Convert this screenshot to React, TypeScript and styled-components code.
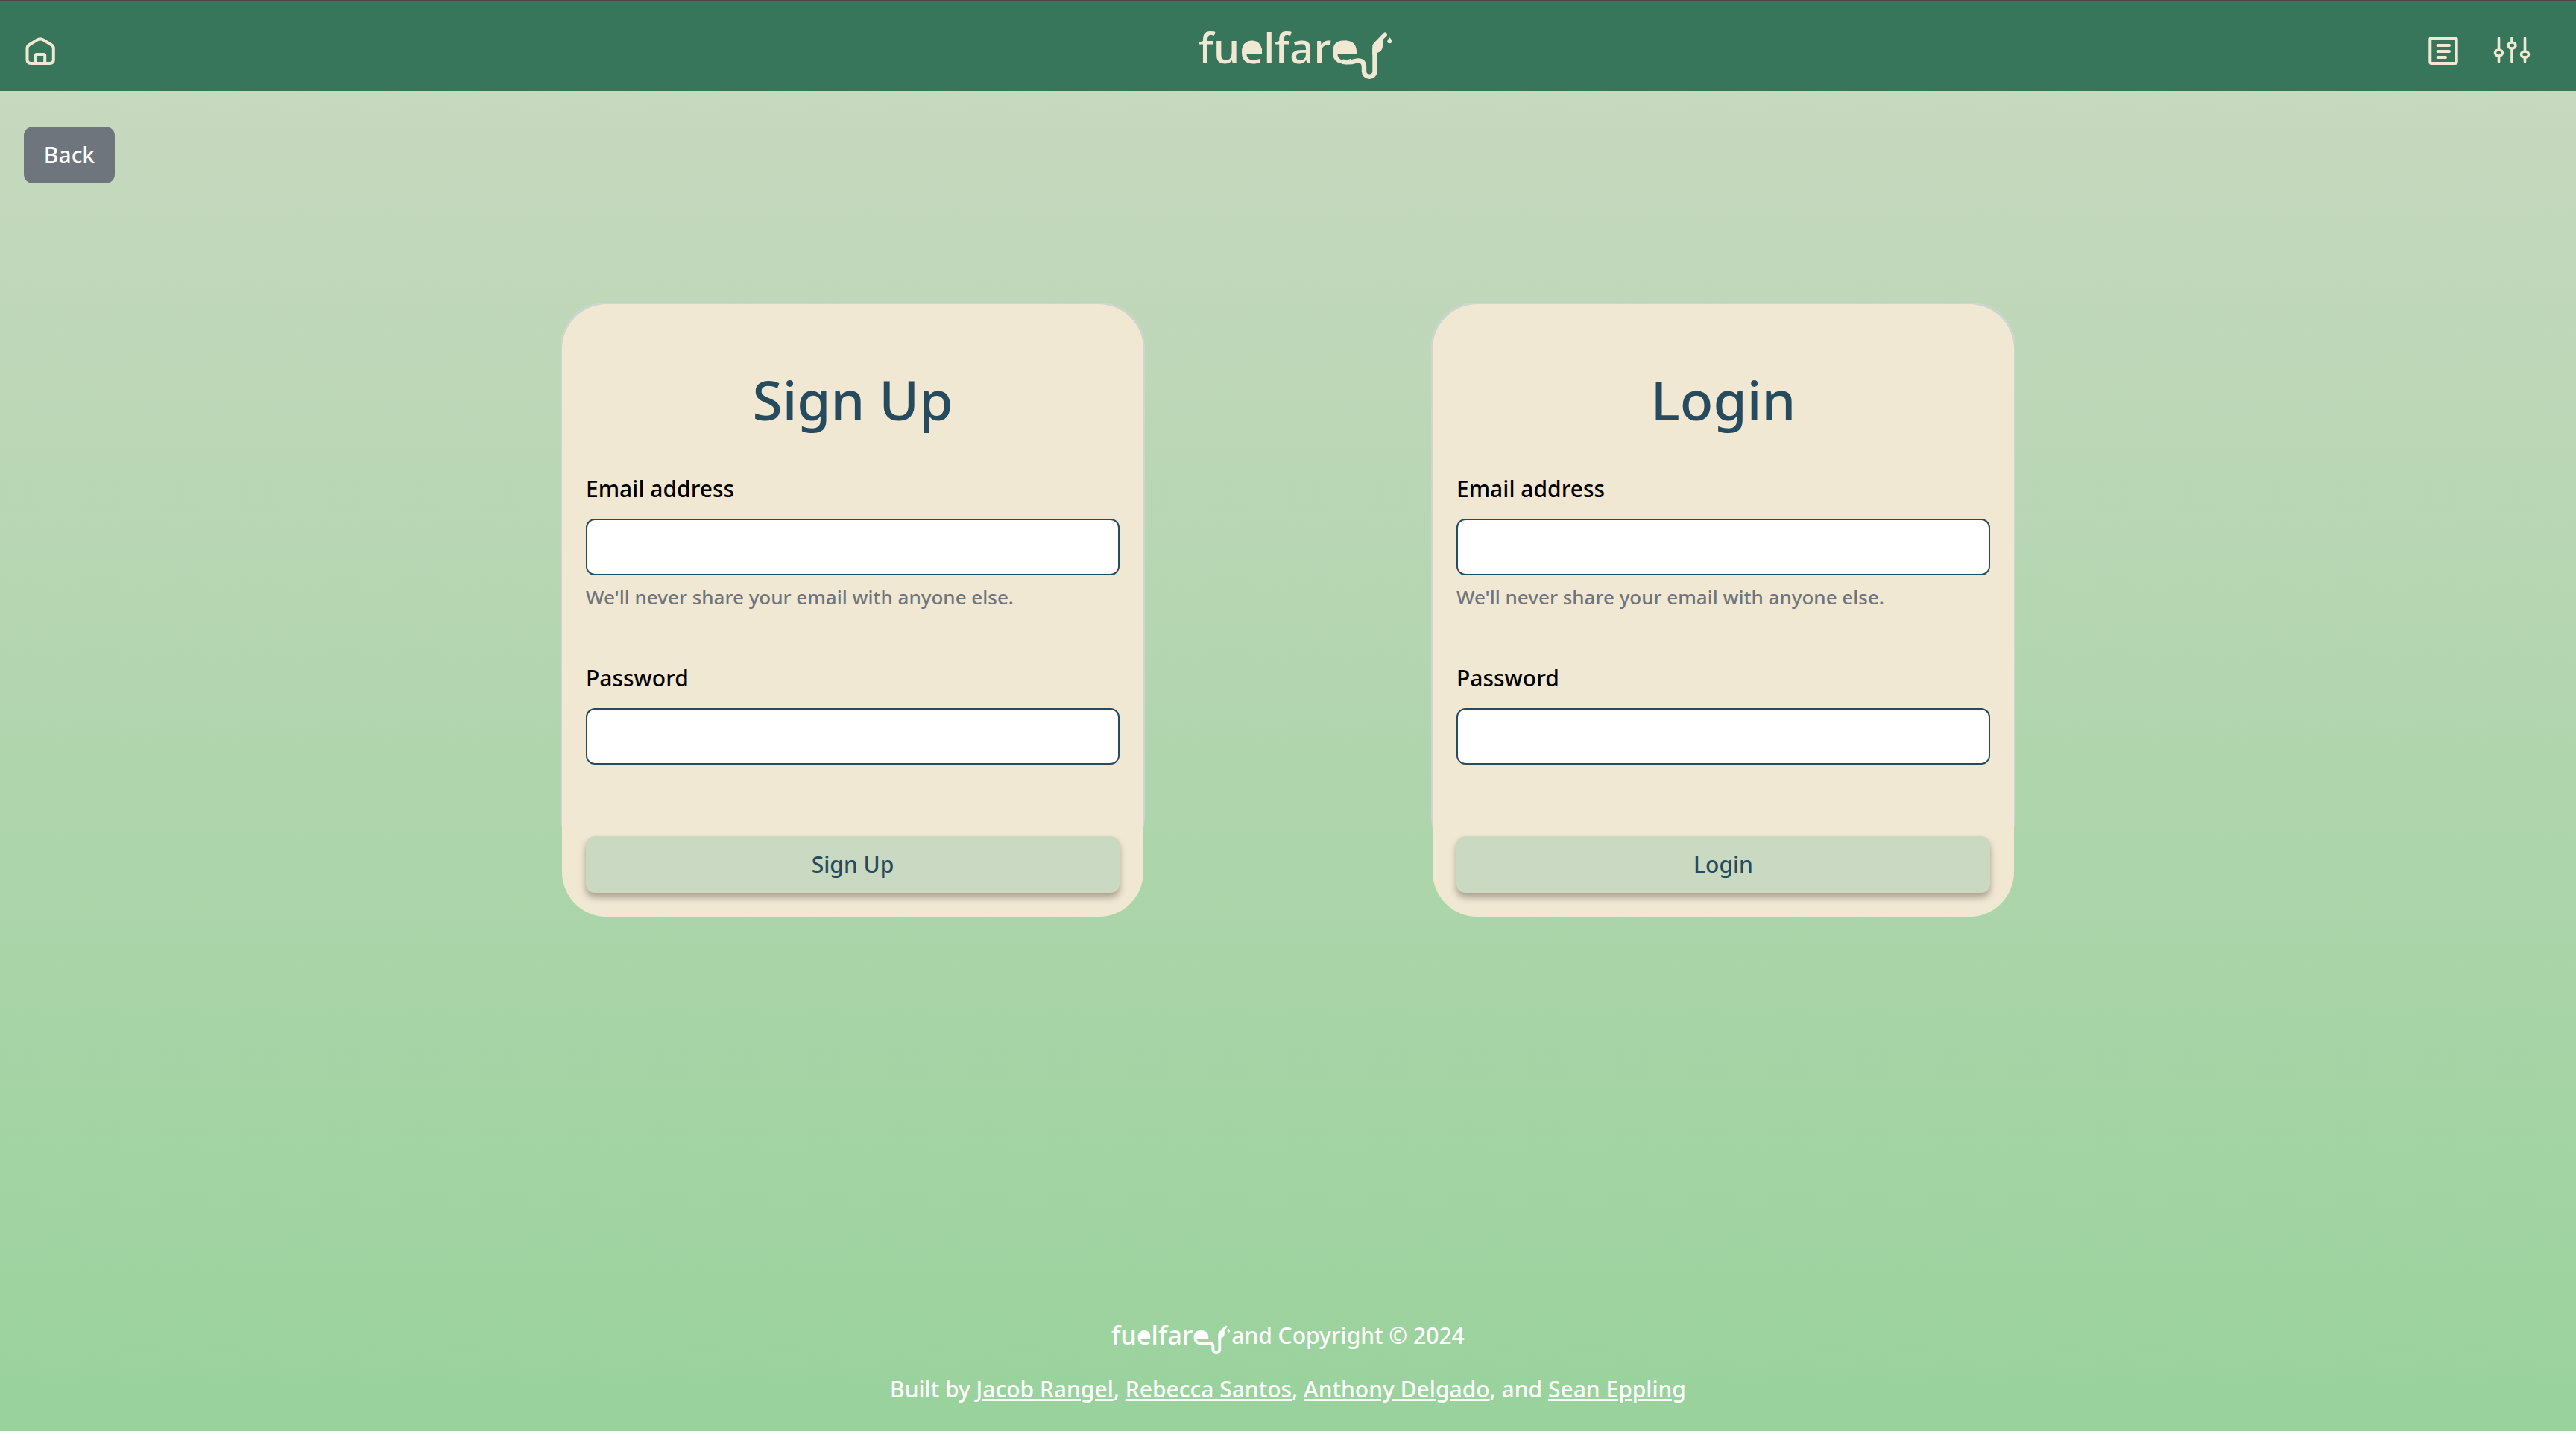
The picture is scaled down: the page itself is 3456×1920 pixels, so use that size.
import React, { useId } from 'react';
import styled, { createGlobalStyle } from 'styled-components';

const color = {
  cream: '#f1e8d4',
  green: '#38765c',
  sage: '#cad9c1',
  mint: '#99d29c',
  navy: '#264b5e',
  gray: '#6e757d',
  line: '#d3d3d3',
};

const GlobalStyle = createGlobalStyle`
  *, *::before, *::after { box-sizing: border-box; }
  body {
    margin: 0;
    font-family: "Noto Sans", "Open Sans", sans-serif;
    font-size: 30px;
    font-weight: 500;
    line-height: 48px;
    color: #000;
  }
  h1, p { margin: 0; }
`;

const Page = styled.div`
  min-height: 100vh;
  display: flex;
  flex-direction: column;
  background: linear-gradient(${color.sage}, ${color.mint});
`;

const Header = styled.header`
  display: grid;
  grid-template-columns: 1fr auto 1fr;
  align-items: center;
  height: 122px;
  padding: 0 60px 0 32px;
  border-top: 2px solid #4a484a;
  background: ${color.green};
  color: ${color.cream};
`;

const HeaderNav = styled.nav<{ $end?: boolean }>`
  display: flex;
  justify-content: ${(p) => (p.$end ? 'flex-end' : 'flex-start')};
  gap: 44px;
  margin-top: 12px;
`;

const IconLink = styled.a`
  display: block;
  color: inherit;

  svg { display: block; }
`;

const Brand = styled.a`
  display: block;
  margin-left: 28px;
  color: inherit;

  svg { display: block; }
`;

const LogoSvg = styled.svg`
  flex: none;
  overflow: visible;
  fill: currentColor;

  text {
    font-family: "Noto Sans", sans-serif;
    font-size: 56px;
    font-weight: 500;
  }
`;

const Main = styled.main`
  flex: 1;
  padding: 48px 32px;
`;

const BackButton = styled.button`
  display: block;
  min-width: 122px;
  height: 76px;
  padding: 0 24px;
  border: 0;
  border-radius: 12px;
  background: ${color.gray};
  color: #fff;
  font: inherit;
`;

const Cards = styled.div`
  display: flex;
  flex-wrap: wrap;
  justify-content: center;
  gap: 96px 384px;
  margin-top: 160px;
`;

const Card = styled.section`
  width: 784px;
  border: 2px solid ${color.line};
  border-radius: 60px;
`;

/* The form is taller than its card frame and hangs over the lower edge. */
const Form = styled.form`
  display: flex;
  flex-direction: column;
  margin-bottom: -76px;
  padding: 80px 32px 32px;
  border-radius: 60px;
  background: ${color.cream};
`;

const Title = styled.h1`
  margin-bottom: 48px;
  color: ${color.navy};
  font-size: 73px;
  font-weight: 500;
  line-height: 96px;
  text-align: center;
`;

const Field = styled.div`
  display: flex;
  flex-direction: column;
  margin-bottom: 64px;
`;

const Label = styled.label`
  margin-bottom: 16px;
`;

const Input = styled.input`
  height: 76px;
  padding: 0 24px;
  border: 2px solid ${color.navy};
  border-radius: 12px;
  background: #fff;
  font: inherit;
`;

const Help = styled.small`
  margin-top: 8px;
  color: ${color.gray};
  font-size: 26px;
  line-height: 42px;
`;

const SubmitButton = styled.button`
  height: 76px;
  margin-top: 32px;
  border: 0;
  border-radius: 12px;
  background: ${color.sage};
  box-shadow: 0 6px 10px rgba(60, 50, 35, 0.4);
  color: ${color.navy};
  font: inherit;
`;

const Footer = styled.footer`
  display: flex;
  flex-direction: column;
  align-items: center;
  gap: 24px;
  padding-bottom: 32px;
  color: #fff;
`;

const Copyright = styled.p`
  display: flex;
  align-items: center;
  height: 48px;

  svg { margin-top: 12px; }
`;

const AuthorLink = styled.a`
  color: inherit;
`;

function Logo({ width, height, viewBox }: { width: number; height: number; viewBox: string }) {
  return (
    <LogoSvg width={width} height={height} viewBox={viewBox} role="img" aria-label="fuelfare">
      <text x="20" y="71">fuelfare</text>
      {/* fill of the two round bowls */}
      <path d="M83 59V52Q85 43 93 43Q103 43 105 52V59Z" />
      <path d="M206 59V52Q209 41 217 40.200Q231 41 232 54V59Z" />
      {/* hose */}
      <path
        d="M213 68.600Q223 70.500 230 68Q242 65 242 76V81.500A7.250 7.250 0 0 0 256.500 81.500V50"
        fill="none"
        stroke="currentColor"
        strokeWidth="6.4"
      />
      {/* nozzle and drop */}
      <path d="M253.300 60V48Q253.500 45.500 255.500 43.500L268.500 30Q270.500 28.500 272.300 30.200Q274 32 272.500 34L267 39.500V48Q267 54.500 259.700 57V60Z" />
      <path d="M276.300 36.300Q279.300 39.500 279.300 41.200A3 3 0 0 1 273.300 41.200Q273.300 39.500 276.300 36.300Z" />
    </LogoSvg>
  );
}

function HomeIcon() {
  return (
    <svg width="44" height="44" viewBox="0 0 44 44" fill="none" stroke="currentColor" strokeWidth="4">
      <path d="M4.500 34V19Q4.500 16 7.200 14.300L17.500 7.800Q22 5 26.500 7.800L37 14.300Q39.800 16 39.800 19V34Q39.800 39 34.800 39H9.500Q4.500 39 4.500 34Z" />
      <path d="M15.600 39V28.500Q15.600 27 17.100 27H26.700Q28.200 27 28.200 28.500V39" />
    </svg>
  );
}

function ListIcon() {
  return (
    <svg width="44" height="44" viewBox="0 0 44 44" fill="none" stroke="currentColor" strokeWidth="4" strokeLinecap="round">
      <rect x="4.300" y="5" width="35.400" height="34" rx="2" />
      <path d="M14.500 15H30M14.500 23H30M14.500 31H25" />
    </svg>
  );
}

function SlidersIcon() {
  return (
    <svg width="52" height="44" viewBox="0 0 52 44" fill="none" stroke="currentColor" strokeWidth="3.6" strokeLinecap="round">
      <path d="M8.500 5V20M8.500 30V37M26 5V10M26 20V37M43.500 5V22M43.500 32V37" />
      <ellipse cx="8.500" cy="25" rx="5" ry="4" />
      <ellipse cx="26" cy="15" rx="5" ry="4" />
      <ellipse cx="43.500" cy="27" rx="5" ry="4" />
    </svg>
  );
}

function AuthCard({ title }: { title: string }) {
  const id = useId();
  return (
    <Card>
      <Form onSubmit={(e) => e.preventDefault()}>
        <Title>{title}</Title>
        <Field>
          <Label htmlFor={`${id}-email`}>Email address</Label>
          <Input id={`${id}-email`} type="email" aria-describedby={`${id}-help`} />
          <Help id={`${id}-help`}>We'll never share your email with anyone else.</Help>
        </Field>
        <Field>
          <Label htmlFor={`${id}-password`}>Password</Label>
          <Input id={`${id}-password`} type="password" />
        </Field>
        <SubmitButton type="submit">{title}</SubmitButton>
      </Form>
    </Card>
  );
}

export default function App() {
  return (
    <>
      <GlobalStyle />
      <Page>
        <Header>
          <HeaderNav>
            <IconLink href="#home" aria-label="Home"><HomeIcon /></IconLink>
          </HeaderNav>
          <Brand href="#home" aria-label="fuelfare">
            <Logo width={280} height={96} viewBox="0 0 280 96" />
          </Brand>
          <HeaderNav $end>
            <IconLink href="#list" aria-label="List"><ListIcon /></IconLink>
            <IconLink href="#settings" aria-label="Settings"><SlidersIcon /></IconLink>
          </HeaderNav>
        </Header>
        <Main>
          <BackButton type="button">Back</BackButton>
          <Cards>
            <AuthCard title="Sign Up" />
            <AuthCard title="Login" />
          </Cards>
        </Main>
        <Footer>
          <Copyright>
            <Logo width={161} height={43} viewBox="20 27 262 70" />
            <span>and Copyright © 2024</span>
          </Copyright>
          <p>
            Built by <AuthorLink href="#jacob">Jacob Rangel</AuthorLink>,{' '}
            <AuthorLink href="#rebecca">Rebecca Santos</AuthorLink>,{' '}
            <AuthorLink href="#anthony">Anthony Delgado</AuthorLink>, and{' '}
            <AuthorLink href="#sean">Sean Eppling</AuthorLink>
          </p>
        </Footer>
      </Page>
    </>
  );
}
